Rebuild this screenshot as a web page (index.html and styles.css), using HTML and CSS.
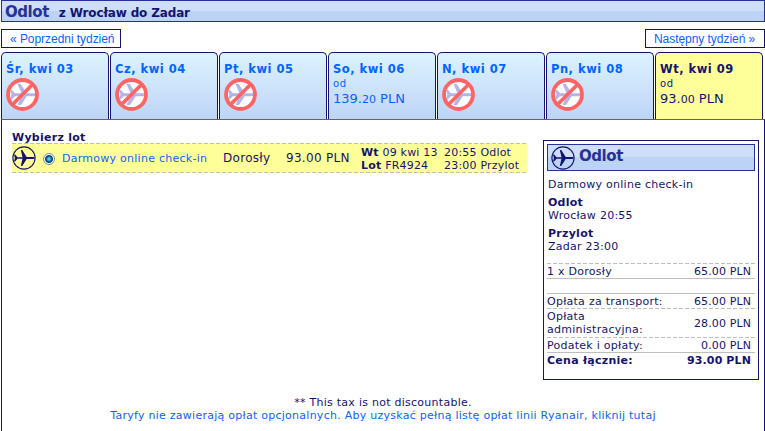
FILE: index.html
```html
<!DOCTYPE html>
<html lang="pl">
<head>
<meta charset="utf-8">
<title>Odlot z Wrocław do Zadar</title>
<link rel="stylesheet" href="styles.css">
</head>
<body>
<svg class="symbols" aria-hidden="true">
  <symbol id="plane" viewBox="0 0 24 24">
    <circle cx="12" cy="12" r="11.1" fill="none" stroke="currentColor" stroke-width="1.1"/>
    <path fill="currentColor" d="M2 8.500h1.200L5.500 11.200h5L8.800 4h1.500L14.700 11H20c2 0 3 .5 3 1s-1 1-3 1h-5.300l-4.400 7H8.800l1.700-7.200h-5L3.200 15.500H2l.9-3.500z"/>
  </symbol>
  <symbol id="no-plane" viewBox="0 0 33 33">
    <circle cx="16.500" cy="16.500" r="15" fill="#fff"/>
    <path fill="#b4b4eb" d="M4 12h2l3 3.200h6.500L11.500 6h3.200l6 9.200H27c2 0 3 .700 3 1.500s-1 1.500-3 1.500h-6.300L15 27h-3.500l4-8.800H9L6 21H4l1.500-4.500z"/>
    <circle cx="16.500" cy="16.500" r="14.500" fill="none" stroke="#ff6464" stroke-width="3.800"/>
    <path d="M6.500 26.500l20-20" stroke="#ff6464" stroke-width="3.800"/>
  </symbol>
</svg>
<main class="page">
  <header class="bar main-bar"><h1>Odlot</h1><span class="route">z Wrocław do Zadar</span></header>
  <nav class="weeks"><a class="prev">« Poprzedni tydzień</a><a class="next">Następny tydzień »</a></nav>
  <div class="tabs">
    <div class="tab"><b>Śr, kwi 03</b><svg class="no"><use href="#no-plane"/></svg></div>
    <div class="tab"><b>Cz, kwi 04</b><svg class="no"><use href="#no-plane"/></svg></div>
    <div class="tab"><b>Pt, kwi 05</b><svg class="no"><use href="#no-plane"/></svg></div>
    <div class="tab"><b>So, kwi 06</b><span class="from">od</span><span class="price">139.<small>20</small> PLN</span></div>
    <div class="tab"><b>N, kwi 07</b><svg class="no"><use href="#no-plane"/></svg></div>
    <div class="tab"><b>Pn, kwi 08</b><svg class="no"><use href="#no-plane"/></svg></div>
    <div class="tab active"><b>Wt, kwi 09</b><span class="from">od</span><span class="price">93.<small>00</small> PLN</span></div>
  </div>
  <section class="content">
    <div class="columns">
      <div class="choose">
        <h2>Wybierz lot</h2>
        <div class="flight">
          <svg class="plane"><use href="#plane"/></svg>
          <span class="radio"></span>
          <a class="fare">Darmowy online check-in</a>
          <span class="adult">Dorosły</span>
          <span class="cost">93.00 PLN</span>
          <div class="lines date"><span><b>Wt</b> 09 kwi 13</span><span><b>Lot</b> FR4924</span></div>
          <div class="lines"><span>20:55 Odlot</span><span>23:00 Przylot</span></div>
        </div>
      </div>
      <aside class="summary">
        <div class="bar summary-bar"><svg class="plane"><use href="#plane"/></svg><h1>Odlot</h1></div>
        <p class="check">Darmowy online check-in</p>
        <p><b>Odlot</b>Wrocław 20:55</p>
        <p><b>Przylot</b>Zadar 23:00</p>
        <div class="costs">
          <div class="row"><span>1 x Dorosły</span><span class="sum">65.00 PLN</span></div>
          <div class="row empty"></div>
          <div class="row"><span>Opłata za transport:</span><span class="sum">65.00 PLN</span></div>
          <div class="row tall"><span>Opłata<br>administracyjna:</span><span class="sum">28.00 PLN</span></div>
          <div class="row tax"><span>Podatek i opłaty:</span><span class="sum">0.00 PLN</span></div>
          <div class="row total"><span>Cena łącznie:</span><span class="sum">93.00 PLN</span></div>
        </div>
      </aside>
    </div>
    <footer><div>** This tax is not discountable.</div><a>Taryfy nie zawierają opłat opcjonalnych. Aby uzyskać pełną listę opłat linii Ryanair, kliknij tutaj</a></footer>
  </section>
</main>
</body>
</html>
```
FILE: styles.css
```css
* { box-sizing: border-box; }
body { margin: 0; background: #fff; color: #14146e; font: 11px/13px "DejaVu Sans", sans-serif; letter-spacing: 0.26px; overflow: hidden; }
h1, h2, p { margin: 0; }
a { color: #0d62ff; }
.symbols { display: none; }
.page { margin-left: 1px; height: 431px; display: flex; flex-direction: column; }
.bar { flex: none; height: 22px; border: 1px solid #283296; background: linear-gradient(#cfdffa 50%, #bdd3f6 50%); display: flex; align-items: center; padding-left: 3px; white-space: nowrap; }
.bar h1 { font-size: 15px; line-height: 20px; color: #283296; letter-spacing: -0.45px; }
.main-bar { padding-top: 2px; }
.route { margin: 3px 0 0 10px; font-weight: bold; font-size: 12px; letter-spacing: -0.15px; }
.weeks { flex: none; margin-top: 7px; height: 19px; display: flex; justify-content: space-between; font: 12px/19px "Liberation Sans", sans-serif; letter-spacing: -0.05px; }
.weeks a { border: 1px solid #14146e; width: 120px; padding-left: 8px; white-space: nowrap; }
.tabs { flex: none; margin-top: 4px; height: 67px; display: flex; gap: 1px; }
.tab { width: 108px; border: 1px solid #14146e; border-bottom: 0; border-radius: 5px 5px 0 0; background: linear-gradient(#dcf3ff, #bed4f6); color: #0064ff; padding: 8px 0 0 4px; display: flex; flex-direction: column; white-space: nowrap; }
.tab b { line-height: 16px; font-size: 11.500px; letter-spacing: 0.5px; }
.tab .no { width: 33px; height: 33px; margin-top: 1px; }
.from { margin-top: 1px; font-size: 10px; line-height: 11px; letter-spacing: 0.7px; }
.price { font-size: 13px; line-height: 19px; letter-spacing: 0; }
.price small { font-size: 11px; }
.active { background: #ff9; color: #14146e; }
.content { flex: 1; border: 1px solid #14146e; border-top-color: #646464; border-bottom: 0; }
.columns { display: flex; height: 276px; }
.choose { width: 515px; margin-left: 10px; padding-top: 12px; }
.choose h2 { font-size: 11px; line-height: 11px; }
.flight { height: 30px; background: repeating-linear-gradient(90deg, #bebebe 0 4px, transparent 4px 6px) top/100% 1px no-repeat, repeating-linear-gradient(90deg, #bebebe 0 4px, transparent 4px 6px) bottom/100% 1px no-repeat, #ff9; display: grid; grid-template-columns: 31px 19px 161px 63px 75px 83px 1fr; align-items: center; white-space: nowrap; }
.plane { width: 24px; height: 24px; }
.radio { width: 12px; height: 12px; margin-top: 2px; border: 1px solid #868ba0; border-radius: 50%; background: radial-gradient(circle, #55c6ee 0 1px, #08477c 3px, #08477c 3.500px, #fff 4.500px); }
.fare { font-size: 11px; }
.adult, .cost { font-size: 12px; letter-spacing: 0.3px; }
.adult { padding-top: 1px; }
.cost { padding-top: 1px; }
.lines { display: grid; grid-template-rows: 13px 13px; padding-top: 2px; letter-spacing: 0.2px; }
.summary { margin: 20px 0 0 16px; width: 216px; height: 240px; border: 1px solid #14146e; padding: 3px; }
.summary-bar { height: 27px; }
.summary-bar h1 { margin: -3px 0 0 4px; }
.summary p { padding-left: 1px; margin-bottom: 5px; }
.summary p.check { margin: 7px 0 5px; }
.summary p b { display: block; }
.costs { margin-top: 10px; white-space: nowrap; }
.row { height: 15px; display: flex; justify-content: space-between; align-items: center; padding: 1px 4px 0 0; background: repeating-linear-gradient(90deg, #bebebe 0 4px, transparent 4px 6px) top/100% 1px no-repeat; }
.row.empty, .row.empty + .row, .row.total { background: linear-gradient(#bebebe, #bebebe) top/100% 1px no-repeat; }
.row.tall { height: 29px; }
.row.tax, .row.total { padding-top: 2px; }
.row.total { font-weight: bold; }
.sum { letter-spacing: 0.12px; }
footer { text-align: center; white-space: nowrap; }
```
